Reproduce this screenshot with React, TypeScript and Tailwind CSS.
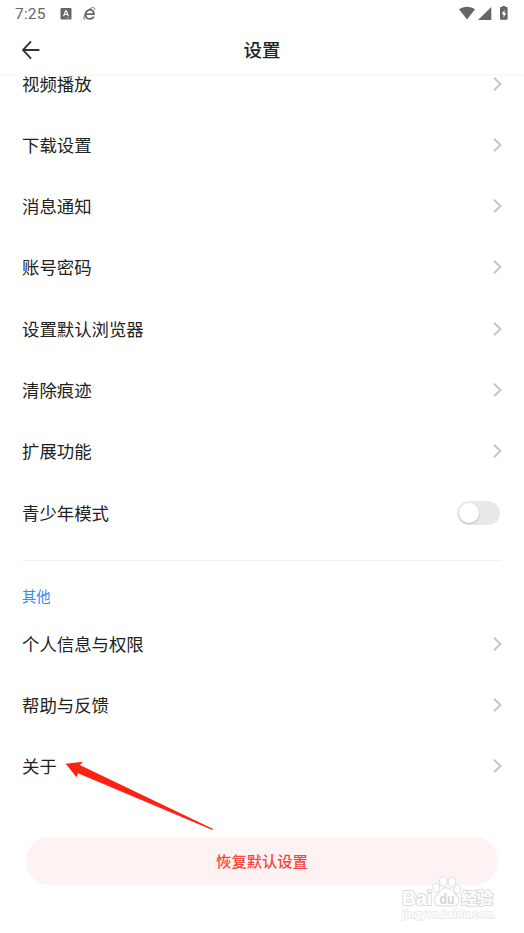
interface SettingItem {
  label: string;
  toggle?: boolean;
}

const generalItems: SettingItem[] = [
  { label: "视频播放" },
  { label: "下载设置" },
  { label: "消息通知" },
  { label: "账号密码" },
  { label: "设置默认浏览器" },
  { label: "清除痕迹" },
  { label: "扩展功能" },
  { label: "青少年模式", toggle: true },
];

const otherItems: SettingItem[] = [
  { label: "个人信息与权限" },
  { label: "帮助与反馈" },
  { label: "关于" },
];

function StatusBar() {
  return (
    <div className="flex h-[27px] items-center justify-between pr-[15px] pl-[15px] text-[#666]">
      <div className="flex items-center">
        <span className="w-[45px] pt-px font-['Roboto',sans-serif] text-[15.5px] leading-[27px] tracking-[0.2px]">7:25</span>
        <svg className="h-[12px] w-[12px]" viewBox="0 0 12 12">
          <rect x="0.5" y="0" width="11" height="11.5" rx="1" fill="currentColor" />
          <path d="M3.6 8.2 5.6 2.8h.8l2 5.4M4.4 6.5h3.2" fill="none" stroke="#fff" strokeWidth="1.2" />
          <path d="M6.4 10h1M8.4 10h1" stroke="#fff" strokeWidth="0.7" />
        </svg>
        <svg className="ml-[11px] h-[14px] w-[14px]" viewBox="0 0 14 14" fill="none" stroke="currentColor">
          <path d="M2.6 7.2h8.3C10.9 4.3 9.2 2.8 6.9 2.8 4.4 2.8 2.5 4.7 2.5 7.4s1.9 4.5 4.5 4.5c1.8 0 3.2-.8 3.8-2.4" strokeWidth="1.8" />
          <path d="M1.4 13C-.4 10.3 2.8 4.4 6.9 1.7c3.1-1.9 5.3-1.3 4.7 1.4" strokeWidth="0.9" />
        </svg>
      </div>
      <svg className="h-[16px] w-[50px]" viewBox="0 0 50 16" fill="currentColor">
        <path d="M0 3.2C4.5-.2 11.5-.2 16 3.2L8 13.6Z" />
        <path d="M32.3.9v13H19Z" />
        <path d="M43.2-.1h3.2v1.2h1.4q.8 0 .8.8v11.1q0 .8-.8.8h-6q-.8 0-.8-.8V1.9q0-.8.8-.8h1.4Z" />
        <path d="M45.6 3.7 42.6 8.3h1.9v3.5L47.2 7h-1.7Z" fill="#fff" />
      </svg>
    </div>
  );
}

function Header() {
  return (
    <header className="relative z-10 h-[74px] shrink-0 bg-white shadow-[0_2px_3px_rgba(0,0,0,0.035)]">
      <StatusBar />
      <div className="grid h-[46px] grid-cols-[1fr_auto_1fr] items-center">
        <svg className="ml-[22px] h-[20px] w-[18px]" viewBox="0 0 18 20" fill="none" stroke="#333" strokeWidth="1.9">
          <path d="M17.4 10H1.2M9 1.4 1 10l8 8.6" />
        </svg>
        <h1 className="-mt-[2px] text-[18.5px] leading-[26px] font-medium text-[#222]">设置</h1>
      </div>
    </header>
  );
}

function SettingRow({ label, toggle }: SettingItem) {
  return (
    <div className="flex h-[61.3px] items-center justify-between pr-[22px] pl-[22px]">
      <span className="text-[17.4px] leading-[26px] text-[#222]">{label}</span>
      {toggle ? (
        <span className="mr-[2.5px] flex h-[24px] w-[43px] items-center rounded-full bg-[#e9e9e9] px-[2px]">
          <span className="h-[20px] w-[20px] rounded-full bg-white shadow-[0_1px_2px_rgba(0,0,0,0.2)]" />
        </span>
      ) : (
        <svg className="h-[14px] w-[9px]" viewBox="0 0 9 14" fill="none" stroke="#c6c6c6" strokeWidth="2">
          <path d="M1 .7 7.5 7 1 13.3" />
        </svg>
      )}
    </div>
  );
}

function Pointer() {
  return (
    <svg className="absolute top-[760px] left-[64px] h-[72px] w-[152px]" viewBox="0 0 152 72">
      <path d="M1.7 3.7 19 1.8 15.8 5.1 149.2 69 148.5 70 14 13.3 12.6 17.2Z" fill="#ff2112" />
    </svg>
  );
}

function Watermark() {
  return (
    <svg className="absolute top-[872px] left-[398px] h-[61px] w-[110px]" viewBox="0 0 110 61">
      <g fill="#fff" stroke="#dcdcdc" strokeWidth="2" paintOrder="stroke" strokeLinejoin="round">
        <g fontFamily="Liberation Sans, Noto Sans CJK SC, sans-serif" fontWeight="bold">
          <text x="4" y="33" fontSize="20" textLength="30" lengthAdjust="spacingAndGlyphs">Bai</text>
          <text x="63" y="32" fontSize="16" textLength="32" lengthAdjust="spacingAndGlyphs">经验</text>
        </g>
        <ellipse cx="38.3" cy="15.8" rx="3" ry="4" />
        <ellipse cx="45.3" cy="9.6" rx="3.4" ry="4.6" />
        <ellipse cx="54" cy="10" rx="3.4" ry="4.6" />
        <ellipse cx="59.3" cy="17.2" rx="3" ry="4" />
        <path d="M48.5 16.3c-5 0-6.2 4.3-9.3 7.1-4.5 4-2.5 10 2.8 10h13.4c5.2 0 7-6.1 2.6-10-3.2-2.8-4.5-7.1-9.5-7.1Z" />
        <text x="41.5" y="31.5" fontSize="14" fontFamily="Liberation Sans, sans-serif" fontWeight="bold" fill="#d5d5d5" stroke="none" textLength="15" lengthAdjust="spacingAndGlyphs">du</text>
      </g>
      <text x="4" y="45.5" fontSize="11" fontFamily="Liberation Sans, sans-serif" fontWeight="bold" fill="#fff" stroke="#e8e8e8" strokeWidth="1.4" paintOrder="stroke" textLength="92" lengthAdjust="spacingAndGlyphs">jingyan.baidu.com</text>
    </svg>
  );
}

export default function App() {
  return (
    <div className="relative flex h-[933px] w-[524px] flex-col overflow-hidden bg-white font-['Noto_Sans_CJK_SC',sans-serif]">
      <Header />
      <main className="-mt-[21.1px]">
        {generalItems.map((item) => (
          <SettingRow key={item.label} {...item} />
        ))}
        <div className="mr-[23px] ml-[22px] mt-[16.7px] h-px bg-[#f2f2f2]" />
        <h2 className="mt-[24px] mb-[7px] pl-[22px] text-[14.3px] leading-[21px] text-[#338af0]">其他</h2>
        {otherItems.map((item) => (
          <SettingRow key={item.label} {...item} />
        ))}
        <button className="mx-[26px] mt-[40px] h-[48px] w-[472px] rounded-full bg-[#fff2f2] text-[15.3px] font-medium text-[#fc433b]">
          恢复默认设置
        </button>
      </main>
      <Pointer />
      <Watermark />
    </div>
  );
}
